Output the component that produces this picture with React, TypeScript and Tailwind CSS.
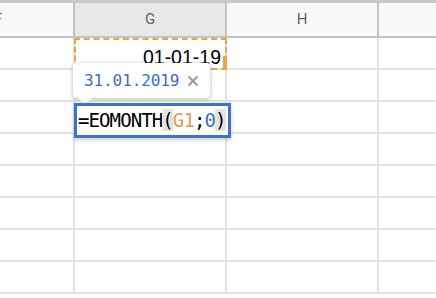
const COLS = ["F", "G", "H", ""];
const ROWS = 8;

export default function App() {
  return (
    <div className="relative w-[436px] h-[298px] overflow-hidden bg-white border-t-[3px] border-[#c9c9c9] font-['Liberation_Sans',Arial,sans-serif]">
      <div className="ml-[-77px] w-[640px]">
        {/* column headers */}
        <div className="flex h-[35px]">
          {COLS.map((c, i) => (
            <div
              key={i}
              className={`w-[152px] shrink-0 flex items-center justify-center border-r-2 border-b-2 border-[#c4c4c4] text-[15px] text-[#5f6368] font-['Roboto',sans-serif] ${
                c === "G" ? "bg-[#e7e8ea]" : "bg-[#f8f9fa]"
              }`}
            >
              {c}
            </div>
          ))}
        </div>

        {/* grid rows */}
        {Array.from({ length: ROWS }).map((_, r) => (
          <div key={r} className="flex h-[32px]">
            {COLS.map((c, i) => (
              <div
                key={i}
                className="relative w-[152px] shrink-0 border-r-2 border-b-2 border-[#e2e2e2]"
              >
                {r === 0 && c === "G" && (
                  <>
                    <div className="absolute -left-[1px] top-0 w-[153px] h-[32px] border-2 border-dashed border-[#f0a243]" />
                    <div className="absolute right-[-2px] bottom-0 w-[4px] h-[12px] bg-[#f0a243]" />
                    <div className="absolute inset-0 flex items-end justify-end pr-[4px] pb-[1px] text-[19.5px] leading-none text-black">
                      01-01-19
                    </div>
                  </>
                )}
              </div>
            ))}
          </div>
        ))}
      </div>

      {/* date preview tooltip */}
      <div className="absolute left-[73px] top-[60px] w-[137px] h-[35px] bg-white rounded-[3px] shadow-[0_1px_4px_rgba(0,0,0,0.3)] flex items-center pl-[11px] gap-[8px]">
        <span className="font-['DejaVu_Sans_Mono',monospace] text-[16px] tracking-[-0.1px] text-[#3a6ec7]">
          31.01.2019
        </span>
        <svg width="12" height="12" viewBox="0 0 12 12" className="mt-[1px]">
          <path d="M1.5 1.5 L10.5 10.5 M10.5 1.5 L1.5 10.5" stroke="#9a9a9a" strokeWidth="2" />
        </svg>
        <svg
          width="18"
          height="9"
          viewBox="0 0 18 9"
          className="absolute left-[3px] bottom-[-8px]"
        >
          <path d="M0 0 L9 8 L18 0 Z" fill="white" />
          <path d="M0 0 L9 8 L18 0" fill="none" stroke="#d0d0d0" strokeWidth="1" />
        </svg>
      </div>

      {/* formula editor */}
      <div className="absolute left-[74px] top-[100px] w-[157px] h-[35px] bg-white border-[3px] border-[#3c73d3] flex items-center pl-[1px] shadow-[0_2px_4px_rgba(0,0,0,0.2)]">
        <span className="font-['DejaVu_Sans_Mono',monospace] text-[19px] tracking-[-0.9px] leading-none text-black whitespace-pre">
          =EOMONTH<span className="bg-[#e4e4e4]">(</span>
          <span className="text-[#e39d4c]">G1</span>;
          <span className="text-[#3a6ec7]">0</span>
          <span className="bg-[#e4e4e4]">)</span>
        </span>
      </div>
    </div>
  );
}
